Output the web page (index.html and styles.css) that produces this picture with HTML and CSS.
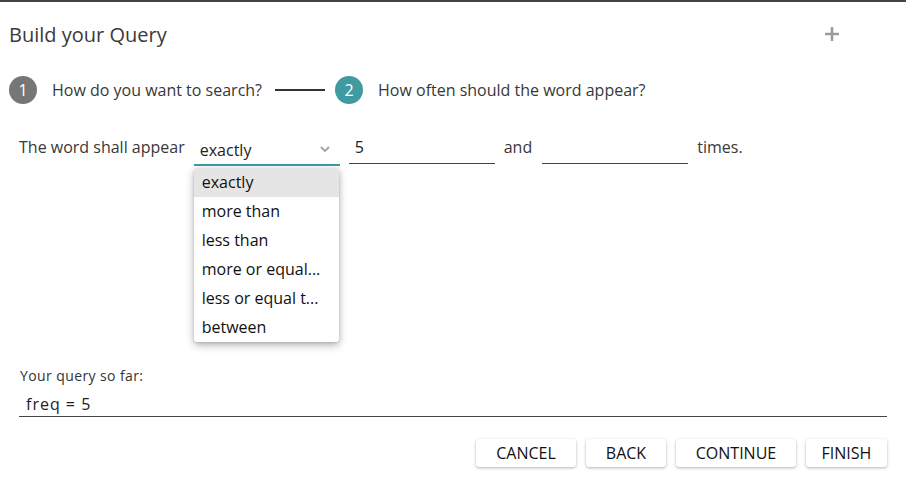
FILE: index.html
```html
<!DOCTYPE html>
<html>
<head>
<meta charset="utf-8">
<link rel="stylesheet" href="styles.css">
</head>
<body>
<div class="dialog">
  <div class="header">
    <h1 class="title">Build your Query</h1>
    <svg class="plus" width="16" height="16" viewBox="0 0 16 16"><path d="M8 1 V15 M1 8 H15" stroke="#9b9b9b" stroke-width="2.6"/></svg>
  </div>
  <div class="stepper">
    <span class="step-num gray">1</span>
    <span class="step-label">How do you want to search?</span>
    <span class="step-line"></span>
    <span class="step-num teal">2</span>
    <span class="step-label">How often should the word appear?</span>
  </div>
  <div class="row">
    <span class="label">The word shall appear</span>
    <div class="select-wrap">
      <div class="select">
        <span>exactly</span>
        <svg class="chev" width="10" height="6" viewBox="0 0 10 6"><path d="M1 1 L5 5 L9 1" fill="none" stroke="#9aa5a8" stroke-width="1.8"/></svg>
      </div>
      <ul class="menu">
        <li class="active">exactly</li>
        <li>more than</li>
        <li>less than</li>
        <li>more or equal...</li>
        <li>less or equal t...</li>
        <li>between</li>
      </ul>
    </div>
    <div class="input">5</div>
    <span class="label and">and</span>
    <div class="input"></div>
    <span class="label">times.</span>
  </div>
  <div class="query">
    <div class="query-label">Your query so far:</div>
    <div class="query-value">freq = 5</div>
  </div>
  <div class="actions">
    <button class="btn w-cancel">CANCEL</button>
    <button class="btn w-back">BACK</button>
    <button class="btn w-cont">CONTINUE</button>
    <button class="btn w-fin">FINISH</button>
  </div>
</div>
</body>
</html>
```
FILE: styles.css
```css
* { box-sizing: border-box; }
html, body { margin: 0; padding: 0; background: #fff; }
body {
  font-family: "Open Sans", "Liberation Sans", sans-serif;
  color: #333;
  width: 906px;
  height: 477px;
  overflow: hidden;
  border-top: 2px solid #444;
}
.dialog { padding: 0 19px 0 9px; }
.header {
  display: flex;
  justify-content: space-between;
  align-items: center;
  height: 62px;
  padding-top: 2px;
}
.title {
  margin: 0;
  font-size: 20px;
  font-weight: 400;
  color: #3a3a3a;
}
.plus {
  margin-right: 47px;
  margin-top: -1px;
}
.stepper {
  display: flex;
  align-items: center;
  height: 30px;
  margin-top: 11px;
}
.step-num {
  width: 28px;
  height: 28px;
  border-radius: 50%;
  color: #fff;
  font-size: 16px;
  display: flex;
  align-items: center;
  justify-content: center;
}
.step-num.gray { background: #767676; }
.step-num.teal { background: #3f9ba0; }
.step-label {
  font-size: 16px;
  color: #383838;
  margin-left: 15px;
}
.step-line {
  width: 50px;
  height: 2px;
  background: #333;
  margin: 0 10px 0 13px;
}
.row {
  display: flex;
  align-items: flex-start;
  margin-top: 25px;
  padding-left: 10px;
  height: 220px;
}
.label {
  font-size: 16px;
  color: #383838;
  line-height: 20px;
  margin-top: 7px;
}
.select-wrap {
  position: relative;
  width: 146px;
  margin-left: 9px;
}
.select {
  height: 36px;
  border-bottom: 2px solid #3f9ba0;
  display: flex;
  justify-content: space-between;
  align-items: center;
  padding: 5px 10px 0 6px;
  font-size: 16px;
  color: #222;
}
.chev { margin-top: -2px; }
.menu {
  position: absolute;
  top: 38px;
  left: 0;
  width: 145px;
  margin: 0;
  padding: 0;
  list-style: none;
  background: #fff;
  border-radius: 3px;
  box-shadow: 0 3px 8px rgba(0,0,0,0.3), 0 1px 3px rgba(0,0,0,0.12);
  z-index: 5;
}
.menu li {
  height: 29px;
  line-height: 29px;
  padding-left: 8px;
  font-size: 16px;
  color: #111;
}
.menu li.active { background: #e5e5e5; border-radius: 3px 3px 0 0; }
.input {
  width: 146px;
  height: 34px;
  border-bottom: 1px solid #444;
  margin-left: 9px;
  margin-right: 9px;
  font-size: 16px;
  color: #222;
  padding: 6px 0 0 6px;
}
.label.and { margin-right: 1px; }
.query {
  margin-left: 10px;
  margin-top: 18px;
  border-bottom: 1px solid #444;
  padding-bottom: 2px;
}
.query-label {
  font-size: 14px;
  letter-spacing: 0.4px;
  color: #333;
  padding-left: 1px;
  line-height: 16px;
}
.query-value {
  font-size: 16px;
  letter-spacing: 1px;
  color: #222;
  padding-left: 7px;
  line-height: 20px;
  margin-top: 10px;
}
.actions {
  display: flex;
  justify-content: flex-end;
  gap: 10px;
  margin-top: 22px;
}
.btn {
  font-family: "Open Sans", "Liberation Sans", sans-serif;
  font-size: 16px;
  color: #111;
  background: #fff;
  border: none;
  border-radius: 3px;
  height: 28px;
  padding: 0;
  box-shadow: 0 1px 3px rgba(0,0,0,0.3);
}
.w-cancel { width: 100px; }
.w-back { width: 80px; }
.w-cont { width: 120px; }
.w-fin { width: 81px; }
```
